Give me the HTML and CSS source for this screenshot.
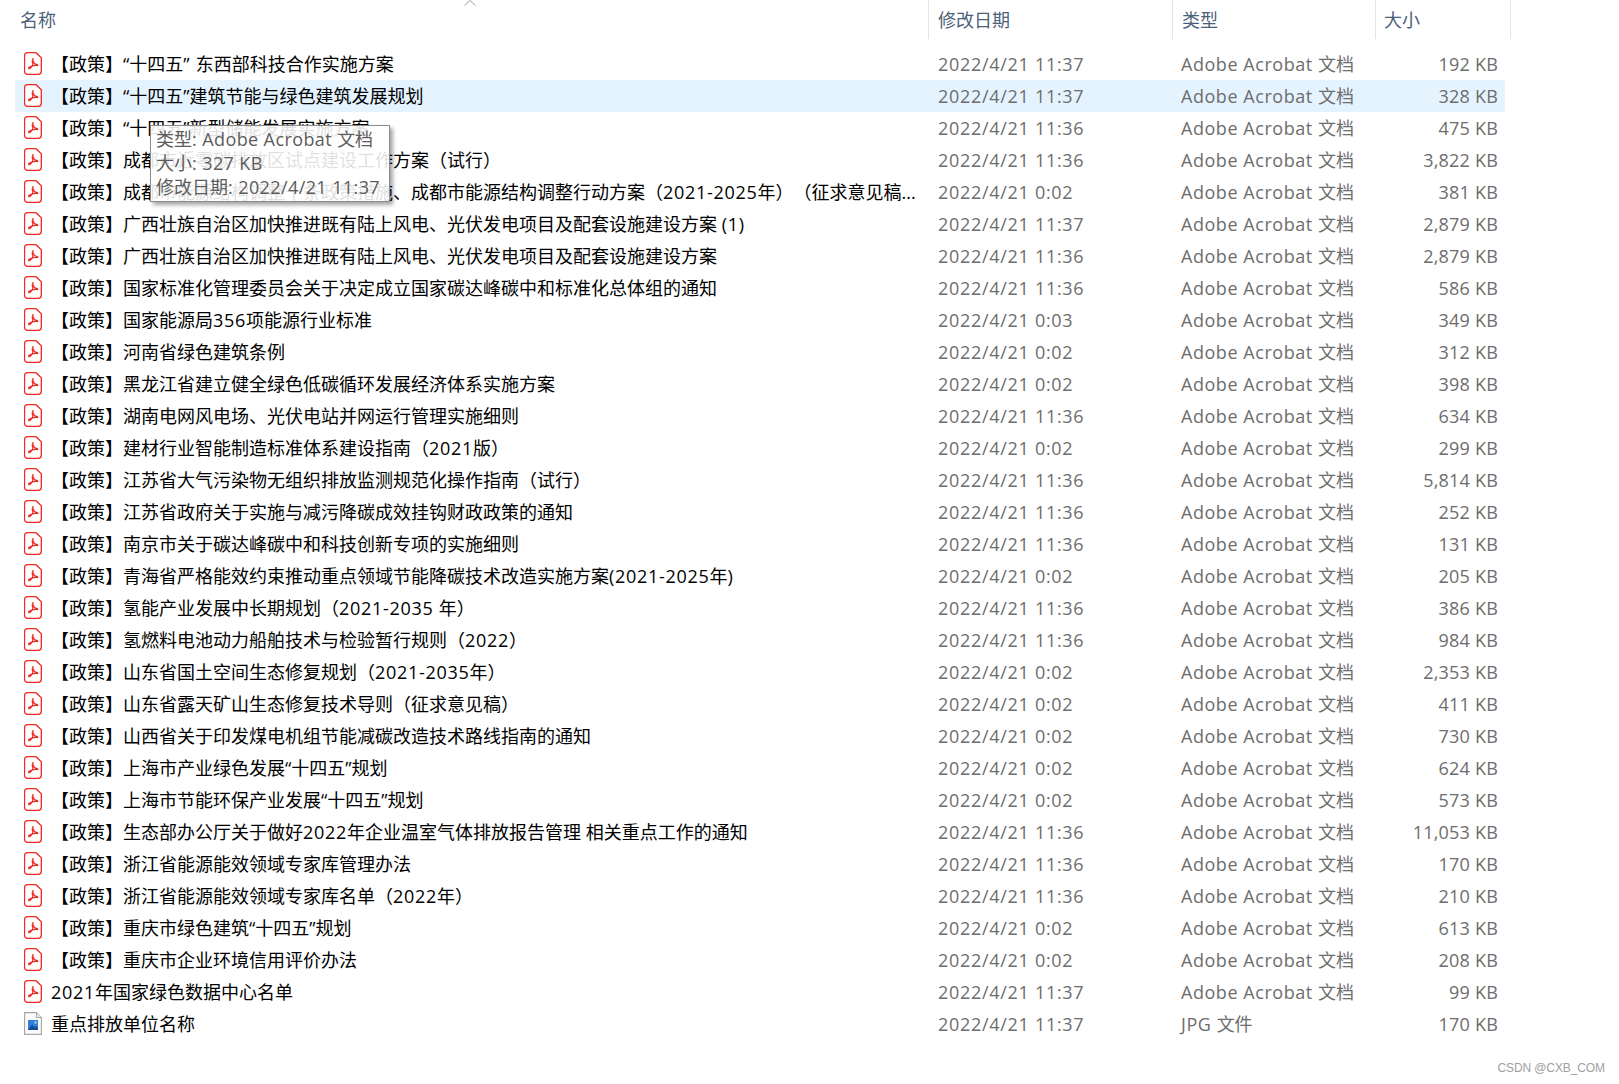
FILE: index.html
```html
<!DOCTYPE html>
<html lang="zh-CN">
<head>
<meta charset="utf-8">
<title>文件列表</title>
<link rel="stylesheet" href="styles.css">
</head>
<body>
<svg class="defs" width="0" height="0" aria-hidden="true">
  <symbol id="pdf" viewBox="0 0 18 23">
    <path d="M3.500.7H12L17.300 5.800V19.300a3 3 0 0 1-3 3H3.500a3 3 0 0 1-3-3V3.700a3 3 0 0 1 3-3Z" fill="#fff" stroke="#f5261e" stroke-width="1.300"/>
    <path d="M9 8c-1 0-1 1.500-.3 3.200.7 1.800-1.800 5-3.500 5.500-.9.2-.8-.8.1-1.400 1.800-1.200 5.200-2.200 7.700-1.800 1.200.2 1.100-.9 0-1-1.800-.2-3.500-1.800-4-3.500-.3-1.200-.3-2.500 0-2.500Z" fill="none" stroke="#ee2a22" stroke-width="1.200"/>
  </symbol>
  <symbol id="jpg" viewBox="0 0 18 23">
    <path d="M.6.6H12.400L17.400 5.600V22.400H.6Z" fill="#fbfbfb" stroke="#a6a6a6" stroke-width="1.100"/>
    <path d="M12.400.6V5.600H17.400" fill="#e6e6e6" stroke="#a6a6a6"/>
    <rect x="4" y="8" width="10" height="10" fill="#2f7fd6"/>
    <path d="M4 18 8 12.500l2.500 3 1.500-1.500 2 2.500V18Z" fill="#134c96"/>
    <rect x="10.500" y="9.500" width="2" height="2" fill="#bfe0fb"/>
  </symbol>
</svg>

<header class="head">
  <div class="hcell hname">名称<svg class="caret" width="12" height="6" viewBox="0 0 12 6"><path d="M.5 5.500 6 .5l5.500 5" fill="none" stroke="#9aa3ad"/></svg></div>
  <div class="hcell hdate">修改日期</div>
  <div class="hcell htype">类型</div>
  <div class="hcell hsize">大小</div>
</header>

<main class="list">
  <div class="row"><svg class="ico"><use href="#pdf"/></svg><span class="name">【政策】“十四五<span class="lat">” </span>东西部科技合作实施方案</span><span class="date">2022/4/21 11:37</span><span class="type"><span class="lat">Adobe Acrobat </span>文档</span><span class="size">192 KB</span></div>
  <div class="row sel"><svg class="ico"><use href="#pdf"/></svg><span class="name">【政策】“十四五”建筑节能与绿色建筑发展规划</span><span class="date">2022/4/21 11:37</span><span class="type"><span class="lat">Adobe Acrobat </span>文档</span><span class="size">328 KB</span></div>
  <div class="row"><svg class="ico"><use href="#pdf"/></svg><span class="name">【政策】“十四五”新型储能发展实施方案</span><span class="date">2022/4/21 11:36</span><span class="type"><span class="lat">Adobe Acrobat </span>文档</span><span class="size">475 KB</span></div>
  <div class="row"><svg class="ico"><use href="#pdf"/></svg><span class="name">【政策】成都市近零碳排放区试点建设工作方案（试行）</span><span class="date">2022/4/21 11:36</span><span class="type"><span class="lat">Adobe Acrobat </span>文档</span><span class="size">3,822 KB</span></div>
  <div class="row"><svg class="ico"><use href="#pdf"/></svg><span class="name">【政策】成都市能源结构调整十条政策措施、成都市能源结构调整行动方案（<span class="lat">2021-2025</span>年）（征求意见稿...</span><span class="date">2022/4/21 0:02</span><span class="type"><span class="lat">Adobe Acrobat </span>文档</span><span class="size">381 KB</span></div>
  <div class="row"><svg class="ico"><use href="#pdf"/></svg><span class="name">【政策】广西壮族自治区加快推进既有陆上风电、光伏发电项目及配套设施建设方案 <span class="lat">(1)</span></span><span class="date">2022/4/21 11:37</span><span class="type"><span class="lat">Adobe Acrobat </span>文档</span><span class="size">2,879 KB</span></div>
  <div class="row"><svg class="ico"><use href="#pdf"/></svg><span class="name">【政策】广西壮族自治区加快推进既有陆上风电、光伏发电项目及配套设施建设方案</span><span class="date">2022/4/21 11:36</span><span class="type"><span class="lat">Adobe Acrobat </span>文档</span><span class="size">2,879 KB</span></div>
  <div class="row"><svg class="ico"><use href="#pdf"/></svg><span class="name">【政策】国家标准化管理委员会关于决定成立国家碳达峰碳中和标准化总体组的通知</span><span class="date">2022/4/21 11:36</span><span class="type"><span class="lat">Adobe Acrobat </span>文档</span><span class="size">586 KB</span></div>
  <div class="row"><svg class="ico"><use href="#pdf"/></svg><span class="name">【政策】国家能源局<span class="lat">356</span>项能源行业标准</span><span class="date">2022/4/21 0:03</span><span class="type"><span class="lat">Adobe Acrobat </span>文档</span><span class="size">349 KB</span></div>
  <div class="row"><svg class="ico"><use href="#pdf"/></svg><span class="name">【政策】河南省绿色建筑条例</span><span class="date">2022/4/21 0:02</span><span class="type"><span class="lat">Adobe Acrobat </span>文档</span><span class="size">312 KB</span></div>
  <div class="row"><svg class="ico"><use href="#pdf"/></svg><span class="name">【政策】黑龙江省建立健全绿色低碳循环发展经济体系实施方案</span><span class="date">2022/4/21 0:02</span><span class="type"><span class="lat">Adobe Acrobat </span>文档</span><span class="size">398 KB</span></div>
  <div class="row"><svg class="ico"><use href="#pdf"/></svg><span class="name">【政策】湖南电网风电场、光伏电站并网运行管理实施细则</span><span class="date">2022/4/21 11:36</span><span class="type"><span class="lat">Adobe Acrobat </span>文档</span><span class="size">634 KB</span></div>
  <div class="row"><svg class="ico"><use href="#pdf"/></svg><span class="name">【政策】建材行业智能制造标准体系建设指南（<span class="lat">2021</span>版）</span><span class="date">2022/4/21 0:02</span><span class="type"><span class="lat">Adobe Acrobat </span>文档</span><span class="size">299 KB</span></div>
  <div class="row"><svg class="ico"><use href="#pdf"/></svg><span class="name">【政策】江苏省大气污染物无组织排放监测规范化操作指南（试行）</span><span class="date">2022/4/21 11:36</span><span class="type"><span class="lat">Adobe Acrobat </span>文档</span><span class="size">5,814 KB</span></div>
  <div class="row"><svg class="ico"><use href="#pdf"/></svg><span class="name">【政策】江苏省政府关于实施与减污降碳成效挂钩财政政策的通知</span><span class="date">2022/4/21 11:36</span><span class="type"><span class="lat">Adobe Acrobat </span>文档</span><span class="size">252 KB</span></div>
  <div class="row"><svg class="ico"><use href="#pdf"/></svg><span class="name">【政策】南京市关于碳达峰碳中和科技创新专项的实施细则</span><span class="date">2022/4/21 11:36</span><span class="type"><span class="lat">Adobe Acrobat </span>文档</span><span class="size">131 KB</span></div>
  <div class="row"><svg class="ico"><use href="#pdf"/></svg><span class="name">【政策】青海省严格能效约束推动重点领域节能降碳技术改造实施方案<span class="lat">(2021-2025</span>年<span class="lat">)</span></span><span class="date">2022/4/21 0:02</span><span class="type"><span class="lat">Adobe Acrobat </span>文档</span><span class="size">205 KB</span></div>
  <div class="row"><svg class="ico"><use href="#pdf"/></svg><span class="name">【政策】氢能产业发展中长期规划（<span class="lat">2021-2035 </span>年）</span><span class="date">2022/4/21 11:36</span><span class="type"><span class="lat">Adobe Acrobat </span>文档</span><span class="size">386 KB</span></div>
  <div class="row"><svg class="ico"><use href="#pdf"/></svg><span class="name">【政策】氢燃料电池动力船舶技术与检验暂行规则（<span class="lat">2022</span>）</span><span class="date">2022/4/21 11:36</span><span class="type"><span class="lat">Adobe Acrobat </span>文档</span><span class="size">984 KB</span></div>
  <div class="row"><svg class="ico"><use href="#pdf"/></svg><span class="name">【政策】山东省国土空间生态修复规划（<span class="lat">2021-2035</span>年）</span><span class="date">2022/4/21 0:02</span><span class="type"><span class="lat">Adobe Acrobat </span>文档</span><span class="size">2,353 KB</span></div>
  <div class="row"><svg class="ico"><use href="#pdf"/></svg><span class="name">【政策】山东省露天矿山生态修复技术导则（征求意见稿）</span><span class="date">2022/4/21 0:02</span><span class="type"><span class="lat">Adobe Acrobat </span>文档</span><span class="size">411 KB</span></div>
  <div class="row"><svg class="ico"><use href="#pdf"/></svg><span class="name">【政策】山西省关于印发煤电机组节能减碳改造技术路线指南的通知</span><span class="date">2022/4/21 0:02</span><span class="type"><span class="lat">Adobe Acrobat </span>文档</span><span class="size">730 KB</span></div>
  <div class="row"><svg class="ico"><use href="#pdf"/></svg><span class="name">【政策】上海市产业绿色发展“十四五”规划</span><span class="date">2022/4/21 0:02</span><span class="type"><span class="lat">Adobe Acrobat </span>文档</span><span class="size">624 KB</span></div>
  <div class="row"><svg class="ico"><use href="#pdf"/></svg><span class="name">【政策】上海市节能环保产业发展“十四五”规划</span><span class="date">2022/4/21 0:02</span><span class="type"><span class="lat">Adobe Acrobat </span>文档</span><span class="size">573 KB</span></div>
  <div class="row"><svg class="ico"><use href="#pdf"/></svg><span class="name">【政策】生态部办公厅关于做好<span class="lat">2022</span>年企业温室气体排放报告管理 相关重点工作的通知</span><span class="date">2022/4/21 11:36</span><span class="type"><span class="lat">Adobe Acrobat </span>文档</span><span class="size">11,053 KB</span></div>
  <div class="row"><svg class="ico"><use href="#pdf"/></svg><span class="name">【政策】浙江省能源能效领域专家库管理办法</span><span class="date">2022/4/21 11:36</span><span class="type"><span class="lat">Adobe Acrobat </span>文档</span><span class="size">170 KB</span></div>
  <div class="row"><svg class="ico"><use href="#pdf"/></svg><span class="name">【政策】浙江省能源能效领域专家库名单（<span class="lat">2022</span>年）</span><span class="date">2022/4/21 11:36</span><span class="type"><span class="lat">Adobe Acrobat </span>文档</span><span class="size">210 KB</span></div>
  <div class="row"><svg class="ico"><use href="#pdf"/></svg><span class="name">【政策】重庆市绿色建筑“十四五”规划</span><span class="date">2022/4/21 0:02</span><span class="type"><span class="lat">Adobe Acrobat </span>文档</span><span class="size">613 KB</span></div>
  <div class="row"><svg class="ico"><use href="#pdf"/></svg><span class="name">【政策】重庆市企业环境信用评价办法</span><span class="date">2022/4/21 0:02</span><span class="type"><span class="lat">Adobe Acrobat </span>文档</span><span class="size">208 KB</span></div>
  <div class="row"><svg class="ico"><use href="#pdf"/></svg><span class="name"><span class="lat">2021</span>年国家绿色数据中心名单</span><span class="date">2022/4/21 11:37</span><span class="type"><span class="lat">Adobe Acrobat </span>文档</span><span class="size">99 KB</span></div>
  <div class="row"><svg class="ico"><use href="#jpg"/></svg><span class="name">重点排放单位名称</span><span class="date">2022/4/21 11:37</span><span class="type"><span class="lat">JPG </span>文件</span><span class="size">170 KB</span></div>
</main>

<div class="tooltip">
  <div>类型<span class="lat">: Adobe Acrobat </span>文档</div>
  <div>大小<span class="lat">: 327 KB</span></div>
  <div>修改日期<span class="lat">: 2022/4/21 11:37</span></div>
</div>

<div class="mark">CSDN @CXB_COM</div>
</body>
</html>
```

FILE: styles.css
```css
* { box-sizing: border-box; }

html, body {
  margin: 0;
  background: #fff;
}

body {
  position: relative;
  width: 1619px;
  height: 1084px;
  overflow: hidden;
  font-family: "Open Sans", "Noto Sans CJK SC", sans-serif;
  font-size: 18px;
  color: #6d6d6d;
}

.defs { position: absolute; }

.lat { letter-spacing: .7px; }
.type .lat { letter-spacing: .55px; }

.head {
  display: grid;
  grid-template-columns: 929px 244px 203px 135px;
  width: 1511px;
  height: 39px;
  margin-bottom: 9px;
  color: #4c607a;
}

.hcell {
  position: relative;
  display: flex;
  align-items: center;
  border-right: 1px solid #e5e5e5;
  padding: 0 0 2px 9px;
}

.hname { padding-left: 20px; }
.hsize { padding-left: 8px; }

.caret {
  position: absolute;
  left: 464px;
  top: 0;
}

.list {
  display: flex;
  flex-direction: column;
  margin-left: 15px;
  width: 1490px;
}

.row {
  display: grid;
  grid-template-columns: 36px 887px 243px 190px 127px;
  align-items: center;
  height: 32px;
  padding-right: 7px;
  line-height: 30px;
}

.row.sel { background: #e5f3ff; }

.ico {
  width: 18px;
  height: 23px;
  margin: 0 0 2px 9px;
}

.name {
  color: #000;
  white-space: nowrap;
  overflow: hidden;
  text-spacing-trim: space-all;
}

.date { letter-spacing: .7px; }
.size { letter-spacing: .2px; text-align: right; }
.date, .type, .size { white-space: nowrap; }

.tooltip {
  position: absolute;
  left: 150px;
  top: 125px;
  width: 240px;
  height: 77px;
  padding: 1px 5px 0;
  background: rgba(255, 255, 255, .88);
  border: 1px solid #8a8a8a;
  box-shadow: 3px 3px 4px rgba(0, 0, 0, .35);
  color: #5c5c5c;
  line-height: 24px;
  white-space: nowrap;
}

.tooltip .lat { letter-spacing: .4px; }

.mark {
  position: absolute;
  right: 14px;
  bottom: 9px;
  font-family: "Liberation Sans", sans-serif;
  font-size: 12px;
  letter-spacing: -.1px;
  color: #a0a0a0;
}
```
